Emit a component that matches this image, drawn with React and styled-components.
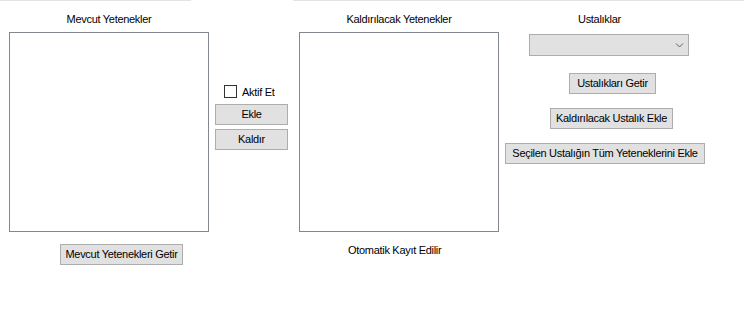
import React from "react";
import styled, { createGlobalStyle } from "styled-components";

const Global = createGlobalStyle`
  html, body { margin: 0; padding: 0; background: #ffffff; }
  body { font-family: "Liberation Sans", Arial, sans-serif; font-size: 11px; letter-spacing: -0.3px; color: #000; }
`;

const Page = styled.div`
  width: 744px;
  height: 320px;
  background: #fff;
  display: flex;
  flex-direction: column;
`;

const TopRule = styled.div`
  display: flex;
  height: 1px;
  gap: 102px;
`;

const RuleSegment = styled.div`
  height: 1px;
  background: #e3e3e3;
  width: ${(p) => (p.$width ? `${p.$width}px` : "auto")};
  flex: ${(p) => (p.$width ? "none" : "1")};
`;

const Content = styled.div`
  display: flex;
  align-items: flex-start;
  padding: 11px 0 0 9px;
`;

const Column = styled.div`
  display: flex;
  flex-direction: column;
  align-items: flex-start;
  width: ${(p) => p.$width}px;
  margin-left: ${(p) => p.$gap || 0}px;
  padding-top: ${(p) => p.$top || 0}px;
`;

const Label = styled.div`
  height: 14px;
  line-height: 14px;
  white-space: nowrap;
  align-self: ${(p) => (p.$center ? "center" : "flex-start")};
  margin-left: ${(p) => p.$indent || 0}px;
  margin-top: ${(p) => p.$mt || 0}px;
`;

const ListBox = styled.div`
  box-sizing: border-box;
  width: 200px;
  height: 200px;
  margin-top: 6px;
  border: 1px solid #828790;
  background: #fff;
`;

const Button = styled.button`
  box-sizing: border-box;
  height: 21px;
  width: ${(p) => p.$width}px;
  margin-left: ${(p) => p.$indent || 0}px;
  margin-top: ${(p) => p.$mt || 0}px;
  padding: 0;
  border: 1px solid #adadad;
  background: #e1e1e1;
  font-family: "Liberation Sans", Arial, sans-serif;
  font-size: 11px;
  letter-spacing: -0.3px;
  color: #000;
  white-space: nowrap;
  line-height: 19px;
`;

const CheckRow = styled.label`
  display: flex;
  align-items: center;
  height: 17px;
  gap: 5px;
  padding-left: 9px;
  margin-bottom: 4px;
  white-space: nowrap;
`;

const CheckBox = styled.span`
  box-sizing: border-box;
  width: 13px;
  height: 13px;
  border: 1px solid #333;
  background: #fff;
`;

const Combo = styled.div`
  box-sizing: border-box;
  width: 160px;
  height: 22px;
  margin-left: 24px;
  margin-top: 8px;
  border: 1px solid #adadad;
  background: #e1e1e1;
  display: flex;
  align-items: center;
  justify-content: flex-end;
  padding-right: 4px;
`;

const Chevron = () => (
  <svg width="9" height="6" viewBox="0 0 9 6">
    <path d="M1 1.5 L4.5 5 L8 1.5" fill="none" stroke="#606060" strokeWidth="1" />
  </svg>
);

export default function App() {
  return (
    <Page>
      <Global />
      <TopRule>
        <RuleSegment $width={191} />
        <RuleSegment />
      </TopRule>
      <Content>
        <Column $width={200}>
          <Label $center>Mevcut Yetenekler</Label>
          <ListBox />
          <Button $width={123} $indent={51} $mt={12}>Mevcut Yetenekleri Getir</Button>
        </Column>
        <Column $width={73} $gap={6} $top={71}>
          <CheckRow>
            <CheckBox />
            Aktif Et
          </CheckRow>
          <Button $width={73}>Ekle</Button>
          <Button $width={73} $mt={4}>Kaldır</Button>
        </Column>
        <Column $width={200} $gap={11}>
          <Label $center>Kaldırılacak Yetenekler</Label>
          <ListBox />
          <Label $indent={49} $mt={11}>Otomatik Kayıt Edilir</Label>
        </Column>
        <Column $width={200} $gap={6}>
          <Label $indent={73}>Ustalıklar</Label>
          <Combo>
            <Chevron />
          </Combo>
          <Button $width={87} $indent={64} $mt={17}>Ustalıkları Getir</Button>
          <Button $width={123} $indent={45} $mt={14}>Kaldırılacak Ustalık Ekle</Button>
          <Button $width={200} $mt={14}>Seçilen Ustalığın Tüm Yeteneklerini Ekle</Button>
        </Column>
      </Content>
    </Page>
  );
}
